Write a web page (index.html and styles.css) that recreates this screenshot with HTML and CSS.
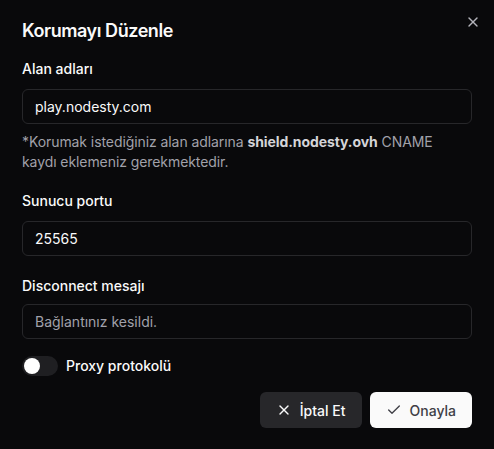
FILE: index.html
```html
<!DOCTYPE html>
<html lang="tr">
<head>
<meta charset="utf-8">
<title>Korumayı Düzenle</title>
<link rel="stylesheet" href="styles.css">
</head>
<body>
<div class="dialog">
  <button class="close" aria-label="Kapat">
    <svg width="16" height="16" viewBox="0 0 24 24" fill="none" stroke="currentColor" stroke-width="2" stroke-linecap="round" stroke-linejoin="round"><path d="M18 6 6 18"/><path d="m6 6 12 12"/></svg>
  </button>
  <h2 class="title">Korumayı Düzenle</h2>

  <label class="label label-first">Alan adları</label>
  <div class="input">play.nodesty.com</div>
  <p class="help">*Korumak istediğiniz alan adlarına <strong>shield.nodesty.ovh</strong> CNAME kaydı eklemeniz gerekmektedir.</p>

  <label class="label label-second">Sunucu portu</label>
  <div class="input">25565</div>

  <label class="label label-third">Disconnect mesajı</label>
  <div class="input placeholder">Bağlantınız kesildi.</div>

  <div class="switch-row">
    <span class="switch"><span class="thumb"></span></span>
    <span class="switch-label">Proxy protokolü</span>
  </div>

  <div class="actions">
    <button class="btn btn-secondary">
      <svg width="16" height="16" viewBox="0 0 24 24" fill="none" stroke="currentColor" stroke-width="2" stroke-linecap="round" stroke-linejoin="round"><path d="M18 6 6 18"/><path d="m6 6 12 12"/></svg>
      İptal Et
    </button>
    <button class="btn btn-primary">
      <svg width="16" height="16" viewBox="0 0 24 24" fill="none" stroke="currentColor" stroke-width="2" stroke-linecap="round" stroke-linejoin="round"><path d="M20 6 9 17l-5-5"/></svg>
      Onayla
    </button>
  </div>
</div>
</body>
</html>
```

FILE: styles.css
```css
* { box-sizing: border-box; }
html, body {
  margin: 0;
  padding: 0;
  background: #09090b;
}
body {
  font-family: Inter, "Noto Sans", sans-serif;
  color: #fafafa;
  width: 494px;
  height: 449px;
  overflow: hidden;
}
.dialog {
  position: relative;
  padding: 22px 22px;
  display: flex;
  flex-direction: column;
}
.close {
  position: absolute;
  top: 14px;
  right: 13px;
  width: 16px;
  height: 16px;
  padding: 0;
  border: 0;
  background: none;
  color: #b4b4bb;
  display: flex;
}
.title {
  margin: 0;
  font-size: 18px;
  line-height: 18px;
  font-weight: 600;
  letter-spacing: -0.45px;
}
.label {
  display: block;
  font-size: 14px;
  line-height: 20px;
  font-weight: 500;
  margin-bottom: 10px;
}
.label-first { margin-top: 19px; }
.label-second { margin-top: 19px; }
.label-third { margin-top: 20px; margin-bottom: 8px; }
.input {
  height: 35px;
  border: 1px solid #27272a;
  border-radius: 6px;
  padding: 0 12px;
  display: flex;
  align-items: center;
  font-size: 14px;
  color: #fafafa;
}
.input.placeholder { color: #a1a1aa; }
.help {
  margin: 8px 0 0;
  max-width: 445px;
  font-size: 14px;
  line-height: 20px;
  letter-spacing: -0.08px;
  color: #a1a1aa;
}
.help strong {
  color: #d4d4d8;
  font-weight: 700;
}
.switch-row {
  margin-top: 17px;
  display: flex;
  align-items: center;
  gap: 8px;
}
.switch {
  width: 36px;
  height: 20px;
  border-radius: 10px;
  background: #1f1f22;
  padding: 2px;
  display: flex;
}
.thumb {
  width: 16px;
  height: 16px;
  border-radius: 50%;
  background: #ffffff;
}
.switch-label {
  font-size: 14px;
  line-height: 20px;
  font-weight: 500;
}
.actions {
  margin-top: 16px;
  display: flex;
  justify-content: flex-end;
  gap: 8px;
}
.btn {
  height: 36px;
  padding: 0 16px;
  border: 0;
  border-radius: 6px;
  display: flex;
  align-items: center;
  gap: 8px;
  font-family: inherit;
  font-size: 14px;
  font-weight: 500;
}
.btn-secondary {
  background: #27272a;
  color: #fafafa;
}
.btn-primary {
  background: #fafafa;
  color: #3f3f46;
}
```
